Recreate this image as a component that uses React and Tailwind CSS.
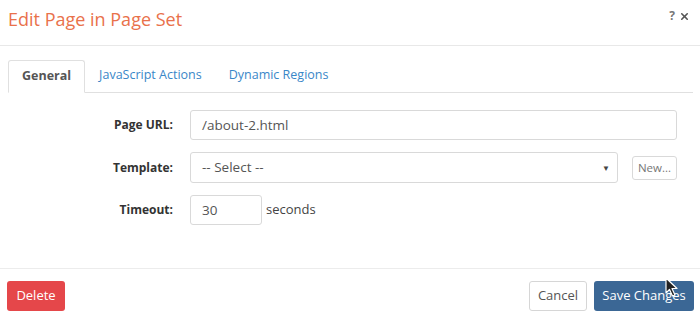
import { X } from 'lucide-react';

const labelCls = "w-[173px] text-right text-[12px] font-bold text-[#333]";
const inputCls = "h-[30px] border border-[#d9d9d9] rounded-[3px] px-[11px] text-[13.5px] text-[#555] bg-white flex items-center";

const App = () => {
  return (
    <div className="w-[700px] h-[320px] bg-white relative overflow-hidden" style={{ fontFamily: '"Open Sans", sans-serif' }}>
      {/* header */}
      <div className="h-[46px] flex items-start justify-between border-b border-[#e8e8e8] pl-[8px] pr-[10px]">
        <h1 className="text-[18px] leading-[18px] mt-[10px] text-[#e9714b]">Edit Page in Page Set</h1>
        <div className="flex items-center gap-[4px] mt-[10px] text-[#777]">
          <span className="text-[12px] font-bold leading-[12px]">?</span>
          <X size={11} strokeWidth={3.5} color="#555" />
        </div>
      </div>

      {/* body */}
      <div className="h-[222px] pt-[14px]">
        <div className="mx-[8px] mr-[7px] h-[33px] flex items-end border-b border-[#e0e0e0]">
          <div className="h-[33px] -mb-px px-[13px] flex items-center border border-[#e0e0e0] border-b-white rounded-t-[3px] bg-white text-[12.5px] font-bold text-[#555]">
            General
          </div>
          <div className="h-[33px] px-[14px] flex items-center text-[12.5px] text-[#3a87c8]">JavaScript Actions</div>
          <div className="h-[33px] px-[13px] flex items-center text-[12.5px] text-[#3a87c8]">Dynamic Regions</div>
        </div>

        <div className="mt-[17px] flex flex-col gap-[12px]">
          <div className="flex items-center">
            <label className={labelCls}>Page URL:</label>
            <div className={`${inputCls} ml-[17px] w-[487px] h-[29px]`}>/about-2.html</div>
          </div>
          <div className="flex items-center">
            <label className={labelCls}>Template:</label>
            <div className={`${inputCls} ml-[17px] w-[428px] h-[31px] justify-between pr-[7px]`}>
              <span>-- Select --</span>
              <span className="text-[8px] text-[#444]">▼</span>
            </div>
            <button className="ml-[14px] w-[45px] h-[24px] border border-[#d9d9d9] rounded-[3px] text-[11.5px] text-[#777] bg-white">New...</button>
          </div>
          <div className="flex items-center">
            <label className={labelCls}>Timeout:</label>
            <div className={`${inputCls} ml-[17px] w-[72px]`}>30</div>
            <span className="ml-[4px] text-[13px] text-[#444]">seconds</span>
          </div>
        </div>
      </div>

      {/* footer */}
      <div className="h-[52px] border-t border-[#ececec] pt-[12px] px-[7px] pr-[6px] flex items-start justify-between">
        <button className="w-[58px] h-[30px] rounded-[3px] bg-[#e5474a] text-white text-[13px]">Delete</button>
        <div className="flex gap-[7px]">
          <button className="w-[58px] h-[30px] rounded-[3px] border border-[#d6d6d6] bg-white text-[#555] text-[13px]">Cancel</button>
          <button className="w-[100px] h-[30px] rounded-[3px] bg-[#3b6795] text-white text-[13px]">Save Changes</button>
        </div>
      </div>

      {/* mouse cursor */}
      <svg className="absolute left-[665px] top-[277px]" width="14" height="21" viewBox="0 0 14 21">
        <path d="M1 1 L1 16 L4.5 12.5 L7.5 19 L10 18 L7 11.5 L12 11.5 Z" fill="#222" stroke="#fff" strokeWidth="1.2" strokeLinejoin="round" />
      </svg>
    </div>
  );
};

export default App;
